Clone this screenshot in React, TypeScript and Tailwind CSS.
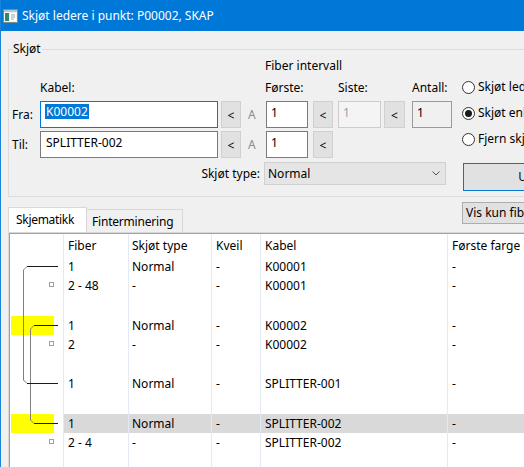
import React from "react";

type Row = {
  fiber: string;
  type: string;
  kveil: string;
  kabel: string;
  farge: string;
  yellow?: boolean;
  selected?: boolean;
  leaf?: boolean;
};

const rows: Row[] = [
  { fiber: "1", type: "Normal", kveil: "-", kabel: "K00001", farge: "-" },
  { fiber: "2 - 48", type: "-", kveil: "-", kabel: "K00001", farge: "-", leaf: true },
  { fiber: "", type: "", kveil: "", kabel: "", farge: "" },
  { fiber: "1", type: "Normal", kveil: "-", kabel: "K00002", farge: "-", yellow: true },
  { fiber: "2", type: "-", kveil: "-", kabel: "K00002", farge: "-", leaf: true },
  { fiber: "", type: "", kveil: "", kabel: "", farge: "" },
  { fiber: "1", type: "Normal", kveil: "-", kabel: "SPLITTER-001", farge: "-" },
  { fiber: "", type: "", kveil: "", kabel: "", farge: "" },
  { fiber: "1", type: "Normal", kveil: "-", kabel: "SPLITTER-002", farge: "-", yellow: true, selected: true },
  { fiber: "2 - 4", type: "-", kveil: "-", kabel: "SPLITTER-002", farge: "-", leaf: true },
  { fiber: "", type: "", kveil: "", kabel: "", farge: "" },
];

const cols = "grid grid-cols-[53px_65px_83px_49px_187px_200px]";
const sep = "border-l border-[#e3eaf3]";

function SmallBtn({ w = "w-[20px]", className = "" }: { w?: string; className?: string }) {
  return (
    <div className={`${w} ${className} shrink-0 bg-[#e1e1e1] border border-[#d0d0d0] flex items-center justify-center pt-[3px]`}>
      &lt;
    </div>
  );
}

function Radio({ label, checked }: { label: string; checked?: boolean }) {
  return (
    <div className="h-[26px] flex items-center whitespace-nowrap">
      <div className="ml-[1px] w-[13px] h-[13px] shrink-0 rounded-full border border-[#333] bg-white flex items-center justify-center">
        {checked && <div className="w-[7px] h-[7px] rounded-full bg-[#1a1a1a]" />}
      </div>
      <span className="ml-[3px]">{label}</span>
    </div>
  );
}

function TitleIcon() {
  return (
    <svg width="15" height="14" viewBox="0 0 15 14">
      <rect x="0.5" y="0.5" width="14" height="13" fill="#f2f2f2" stroke="#7d8a8f" />
      <rect x="1" y="1" width="13" height="2" fill="#b9c6cc" />
      <rect x="2" y="4" width="4" height="8" fill="#2f8a6c" />
      <rect x="7" y="4" width="6" height="8" fill="#ffffff" />
      <path d="M8 6H12M8 8H12M8 10H11" stroke="#9aa6ab" strokeWidth="1" />
    </svg>
  );
}

export default function App() {
  return (
    <div className="w-[524px] h-[467px] overflow-hidden bg-[#f0f0f0] border-l border-[#1883d7] text-[12px] leading-[16px] text-black font-['Noto_Sans',sans-serif] flex flex-col">
      {/* Title bar */}
      <div className="h-[31px] shrink-0 bg-[#0078d7] flex items-center pl-[2px] text-white">
        <TitleIcon />
        <span className="ml-[4px]">Skjøt ledere i punkt: P00002, SKAP</span>
      </div>

      {/* Group box */}
      <div className="relative mt-[18px] ml-[7px] w-[600px] h-[148px] shrink-0 border border-[#dcdcdc] flex">
        <span className="absolute left-[3px] -top-[9px] px-[1px] bg-[#f0f0f0]">Skjøt</span>

        <div className="w-[452px] shrink-0 flex flex-col">
          <div className="mt-[7px] h-[18px] pl-[256px] leading-[18px]">Fiber intervall</div>
          <div className="mt-[3px] h-[19px] flex items-center">
            <span className="ml-[31px] w-[225px]">Kabel:</span>
            <span className="w-[73px]">Første:</span>
            <span className="w-[74px]">Siste:</span>
            <span>Antall:</span>
          </div>

          {/* Fra */}
          <div className="mt-[4px] h-[27px] flex">
            <span className="w-[31px] pl-[3px] flex items-center">Fra:</span>
            <div className="w-[178px] bg-white border border-[#0078d7] pl-[4px] pt-[2px]">
              <span className="bg-[#0078d7] text-white inline-block leading-[15px] px-[1px]">K00002</span>
            </div>
            <SmallBtn className="ml-[3px]" />
            <span className="ml-[7px] w-[18px] flex items-center text-[#8c8c8c]">A</span>
            <div className="w-[42px] bg-white border border-[#7a7a7a] pl-[4px] pt-[3px] leading-[16px]">1</div>
            <SmallBtn className="ml-[5px]" />
            <div className="ml-[5px] w-[43px] bg-[#f4f4f4] border border-[#cccccc] pl-[4px] pt-[3px] leading-[16px] text-[#a0a0a0]">1</div>
            <SmallBtn w="w-[21px]" className="ml-[3px]" />
            <div className="ml-[7px] w-[40px] bg-[#f0f0f0] border border-[#9a9a9a] pl-[4px] pt-[3px] leading-[16px]">1</div>
          </div>

          {/* Til */}
          <div className="mt-[3px] h-[27px] flex">
            <span className="w-[31px] pl-[3px] flex items-center">Til:</span>
            <div className="w-[178px] bg-white border border-[#7a7a7a] pl-[5px] pt-[3px] leading-[16px]">SPLITTER-002</div>
            <SmallBtn className="ml-[3px]" />
            <span className="ml-[7px] w-[18px] flex items-center text-[#8c8c8c]">A</span>
            <div className="w-[42px] bg-white border border-[#7a7a7a] pl-[4px] pt-[3px] leading-[16px]">1</div>
            <SmallBtn className="ml-[5px]" />
          </div>

          {/* Skjøt type */}
          <div className="mt-[4px] h-[23px] flex">
            <span className="w-[251px] flex items-center justify-end">Skjøt type:</span>
            <div className="ml-[4px] w-[182px] bg-[#e5e5e5] border border-[#d0d0d0] flex items-center justify-between pl-[3px] pr-[5px]">
              <span>Normal</span>
              <svg width="8" height="5" viewBox="0 0 8 5">
                <path d="M0.5 0.5L4 4L7.5 0.5" fill="none" stroke="#555" strokeWidth="1" />
              </svg>
            </div>
          </div>
        </div>

        {/* Radio column */}
        <div className="flex flex-col">
          <div className="mt-[24px]">
            <Radio label="Skjøt ledere" />
            <Radio label="Skjøt enkeltfiber" checked />
            <Radio label="Fjern skjøt" />
          </div>
          <div className="mt-[11px] ml-[2px] w-[140px] h-[28px] bg-[#e1e1e1] border border-[#0078d7] flex items-center justify-center">
            Utfør
          </div>
        </div>
      </div>

      {/* Tabs row */}
      <div className="ml-[7px] h-[35px] shrink-0 flex items-end">
        <div className="w-[79px] h-[25px] shrink-0 whitespace-nowrap tracking-[-0.3px] bg-white border-t border-l border-r border-[#d9d9d9] pl-[7px] flex items-center">
          Skjematikk
        </div>
        <div className="w-[96px] h-[23px] shrink-0 whitespace-nowrap tracking-[-0.2px] bg-[#f0f0f0] border-t border-r border-[#d9d9d9] pl-[5px] pt-[2px] flex items-center">
          Finterminering
        </div>
        <div className="self-start shrink-0 mt-[5px] ml-[279px] h-[22px] bg-[#e1e1e1] border border-[#adadad] px-[3px] flex items-center whitespace-nowrap">
          Vis kun fiber med skjøt
        </div>
      </div>

      {/* Panel / list view */}
      <div className="ml-[7px] flex-1 border-l border-t border-[#d9d9d9]">
        <div className="h-full border-l border-t border-[#a0a0a0] bg-white relative">
          <div className={`${cols} h-[23px] items-center`}>
            <div />
            <div className={`${sep} h-full pl-[4px] flex items-center`}>Fiber</div>
            <div className={`${sep} h-full pl-[3px] flex items-center`}>Skjøt type</div>
            <div className={`${sep} h-full pl-[4px] flex items-center`}>Kveil</div>
            <div className={`${sep} h-full pl-[4px] flex items-center`}>Kabel</div>
            <div className={`${sep} h-full pl-[4px] flex items-center`}>Første farge</div>
          </div>

          {rows.map((r, i) => (
            <div key={i} className={`${cols} h-[19.6px] ${r.selected ? "bg-[#d9d9d9]" : ""}`}>
              <div className={`h-full bg-white flex items-center justify-end pr-[9px]`}>
                {r.yellow ? (
                  <div className="ml-[1px] w-full h-full bg-[#ffff00]" />
                ) : r.leaf ? (
                  <div className="w-[5px] h-[5px] border border-[#a0a0a0] bg-white -translate-y-[2px]" />
                ) : null}
              </div>
              <div className={`${sep} pl-[4px] flex items-center`}>{r.fiber}</div>
              <div className={`${sep} pl-[3px] flex items-center`}>{r.type}</div>
              <div className={`${sep} pl-[4px] flex items-center`}>{r.kveil}</div>
              <div className={`${sep} pl-[4px] flex items-center`}>{r.kabel}</div>
              <div className={`${sep} pl-[4px] flex items-center`}>{r.farge}</div>
            </div>
          ))}

          {/* Tree connector lines */}
          <svg className="absolute left-0 top-[23px]" width="53" height="200" viewBox="0 0 53 200">
            <path d="M17 9.5L13.5 13V123L17 126.5M24 68.5L20.5 72V163L24 166.5" fill="none" stroke="#808080" strokeWidth="1" />
            <path d="M48 9.5H17M48 126.5H17M48 68.5H24M48 166.5H24" fill="none" stroke="#1a1a1a" strokeWidth="1" />
          </svg>
        </div>
      </div>
    </div>
  );
}
